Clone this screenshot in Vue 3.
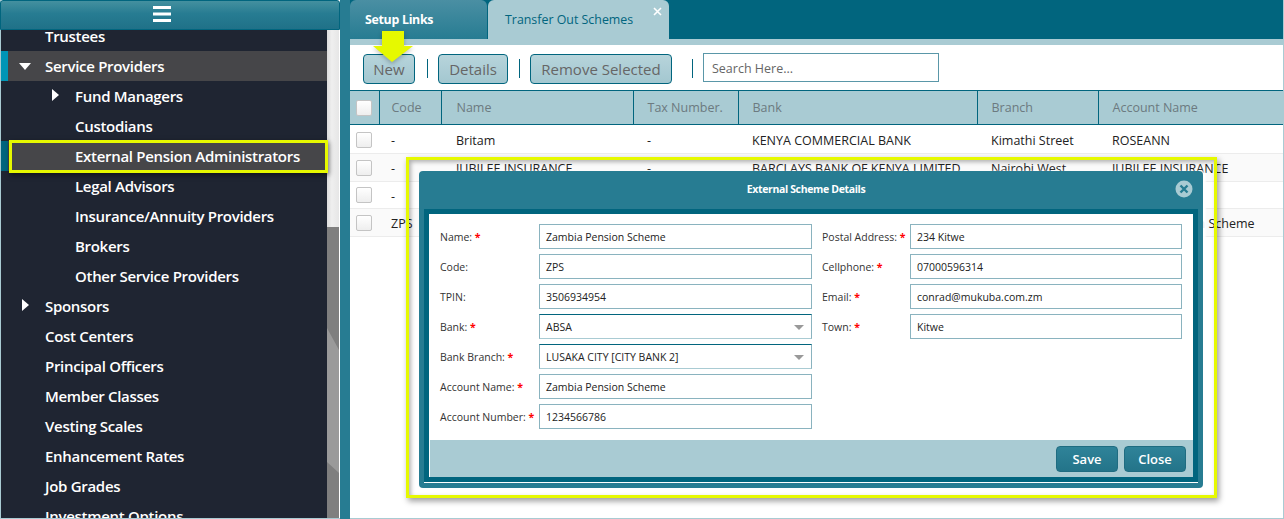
<template>
  <div class="page">
    <aside class="sidebar">
      <div class="side-head">
        <svg width="18" height="17" viewBox="0 0 18 17"><rect y="0" width="18" height="3" fill="#fff" /><rect y="6.5" width="18" height="3" fill="#fff" /><rect y="13" width="18" height="3" fill="#fff" /></svg>
      </div>
      <div class="side-body">
        <ul class="menu">
          <li v-for="item in menu" :key="item.label" :class="['menu-item', 'lvl' + item.level, item.state]">
            <span v-if="item.arrow" :class="['tri', item.arrow]"></span>
            {{ item.label }}
          </li>
        </ul>
        <div class="scrollbar">
          <div class="scroll-track"></div>
          <div class="scroll-thumb">
            <svg width="12" height="292" viewBox="0 0 12 292" preserveAspectRatio="none">
              <polygon points="0,101 12,123 12,246 0,235" fill="#9a9a9a" />
            </svg>
          </div>
        </div>
      </div>
    </aside>

    <div class="gutter"></div>

    <main class="content">
      <div class="tabs">
        <div class="tab tab-off">Setup Links</div>
        <div class="tab tab-on">
          Transfer Out Schemes
          <svg class="tab-x" width="9" height="9" viewBox="0 0 9 9"><path d="M1 1 L8 8 M8 1 L1 8" stroke="#fff" stroke-width="1.6" /></svg>
        </div>
      </div>
      <div class="tab-strip"></div>

      <div class="toolbar">
        <button class="tool-btn btn-new">New</button>
        <span class="sep sep-a"></span>
        <button class="tool-btn btn-details">Details</button>
        <span class="sep sep-b"></span>
        <button class="tool-btn btn-remove">Remove Selected</button>
        <span class="sep sep-c"></span>
        <div class="search">Search Here...</div>
      </div>

      <table class="grid">
        <colgroup>
          <col style="width: 29px" /><col style="width: 62px" /><col style="width: 192px" /><col style="width: 105px" /><col style="width: 239px" /><col style="width: 121px" /><col />
        </colgroup>
        <thead>
          <tr>
            <th class="check-cell"><span class="check"></span></th>
            <th v-for="col in columns" :key="col">{{ col }}</th>
          </tr>
        </thead>
        <tbody>
          <tr v-for="(row, i) in rows" :key="i">
            <td class="check-cell"><span class="check"></span></td>
            <td v-for="(cell, c) in row" :key="c">{{ cell }}</td>
          </tr>
        </tbody>
      </table>
    </main>

    <!-- annotations and dialog sit over the page -->
    <div class="mark-menu"></div>
    <svg class="mark-arrow" width="44" height="34" viewBox="0 0 44 34">
      <polygon points="10,0 32,0 32,15 41,15 20,31 1,15 10,15" fill="#e6f900" />
    </svg>

    <div class="dialog">
      <div class="dialog-title">
        External Scheme Details
        <svg class="dialog-x" width="18" height="18" viewBox="0 0 18 18">
          <circle cx="9" cy="9" r="8.5" fill="#a9cbd3" />
          <path d="M5.5 5.5 L12.5 12.5 M12.5 5.5 L5.5 12.5" stroke="#277c92" stroke-width="2.4" />
        </svg>
      </div>
      <div class="dialog-frame">
        <div class="form">
          <div class="form-col col-left">
            <div v-for="f in leftFields" :key="f.label" class="form-row">
              <label>{{ f.label }}<b v-if="f.req"> *</b></label>
              <div :class="['field', { dark: f.select }]">
                {{ f.value }}
                <span v-if="f.select" class="caret"></span>
              </div>
            </div>
          </div>
          <div class="form-col col-right">
            <div v-for="f in rightFields" :key="f.label" class="form-row">
              <label>{{ f.label }}<b v-if="f.req"> *</b></label>
              <div class="field">{{ f.value }}</div>
            </div>
          </div>
        </div>
        <div class="dialog-foot">
          <button class="foot-btn">Save</button>
          <button class="foot-btn">Close</button>
        </div>
      </div>
    </div>

    <div class="mark-dialog"></div>
  </div>
</template>

<script setup>
const menu = [
  { label: 'Trustees', level: 1 },
  { label: 'Service Providers', level: 1, arrow: 'down', state: 'open' },
  { label: 'Fund Managers', level: 2, arrow: 'right' },
  { label: 'Custodians', level: 2 },
  { label: 'External Pension Administrators', level: 2, state: 'current' },
  { label: 'Legal Advisors', level: 2 },
  { label: 'Insurance/Annuity Providers', level: 2 },
  { label: 'Brokers', level: 2 },
  { label: 'Other Service Providers', level: 2 },
  { label: 'Sponsors', level: 1, arrow: 'right' },
  { label: 'Cost Centers', level: 1 },
  { label: 'Principal Officers', level: 1 },
  { label: 'Member Classes', level: 1 },
  { label: 'Vesting Scales', level: 1 },
  { label: 'Enhancement Rates', level: 1 },
  { label: 'Job Grades', level: 1 },
  { label: 'Investment Options', level: 1 }
]

const columns = ['Code', 'Name', 'Tax Number.', 'Bank', 'Branch', 'Account Name']

// cells the dialog fully covers are left empty
const rows = [
  ['-', 'Britam', '-', 'KENYA COMMERCIAL BANK', 'Kimathi Street', 'ROSEANN'],
  ['-', 'JUBILEE INSURANCE', '-', 'BARCLAYS BANK OF KENYA LIMITED', 'Nairobi West', 'JUBILEE INSURANCE'],
  ['-', '', '', '', '', ''],
  ['ZPS', '', '', '', '', 'Zambia Pension Scheme']
]

const leftFields = [
  { label: 'Name:', req: true, value: 'Zambia Pension Scheme' },
  { label: 'Code:', value: 'ZPS' },
  { label: 'TPIN:', value: '3506934954' },
  { label: 'Bank:', req: true, value: 'ABSA', select: true },
  { label: 'Bank Branch:', req: true, value: 'LUSAKA CITY [CITY BANK 2]', select: true },
  { label: 'Account Name:', req: true, value: 'Zambia Pension Scheme' },
  { label: 'Account Number:', req: true, value: '1234566786' }
]

const rightFields = [
  { label: 'Postal Address:', req: true, value: '234 Kitwe' },
  { label: 'Cellphone:', req: true, value: '07000596314' },
  { label: 'Email:', req: true, value: 'conrad@mukuba.com.zm' },
  { label: 'Town:', req: true, value: 'Kitwe' }
]
</script>

<style>
body {
  margin: 0;
  background: #fff;
}
</style>

<style scoped>
.page {
  position: relative;
  display: flex;
  width: 1284px;
  height: 519px;
  overflow: hidden;
  font-family: 'Open Sans', 'Liberation Sans', sans-serif;
  background: #fff;
}

/* sidebar */
.sidebar {
  width: 340px;
  height: 519px;
  flex: none;
  display: flex;
  flex-direction: column;
  box-sizing: border-box;
  border-left: 1px solid #a9cbd3;
  border-bottom: 1px solid #a9cbd3;
}
.side-head {
  height: 30px;
  flex: none;
  margin-left: -1px;
  box-sizing: border-box;
  display: flex;
  align-items: center;
  justify-content: center;
  padding-bottom: 1px;
  padding-right: 16px;
  background: linear-gradient(#44909f, #277c92 45%, #1f7188);
  border: 1px solid #01657e;
  border-radius: 3px 3px 0 0;
}
.side-body {
  flex: 1;
  display: flex;
  min-height: 0;
}
.menu {
  list-style: none;
  margin: 0;
  padding: 0;
  width: 326px;
  flex: none;
  overflow: hidden;
  background: #1f2532;
}
.menu-item {
  position: relative;
  height: 30px;
  line-height: 30px;
  font-size: 15px;
  font-weight: 600;
  color: #fff;
  white-space: nowrap;
  letter-spacing: -0.3px;
}
.menu-item:first-child {
  margin-top: -9px;
}
.lvl1 {
  padding-left: 44px;
}
.lvl2 {
  padding-left: 74px;
}
.open {
  background: #464649;
  border-left: 7px solid #0095b6;
  padding-left: 37px;
}
.current {
  background: #464649;
  border-left: 7px solid #01657e;
  padding-left: 67px;
}
.tri {
  position: absolute;
  width: 0;
  height: 0;
}
.tri.down {
  left: 11px;
  top: 12px;
  border-left: 6.5px solid transparent;
  border-right: 6.5px solid transparent;
  border-top: 7px solid #fff;
}
.tri.right {
  top: 8px;
  border-top: 6.5px solid transparent;
  border-bottom: 6.5px solid transparent;
  border-left: 7px solid #fff;
}
.lvl1 .tri.right {
  left: 21px;
}
.lvl2 .tri.right {
  left: 51px;
}
.scrollbar {
  width: 13px;
  flex: none;
  display: flex;
  flex-direction: column;
  box-sizing: border-box;
  border-right: 1px solid #fff;
}
.scroll-track {
  height: 197px;
  flex: none;
  background: linear-gradient(90deg, #dcdcdc, #efefef 40%, #e6e6e6);
}
.scroll-thumb {
  flex: 1;
  overflow: hidden;
  background: #7f7f7f;
}
.scroll-thumb svg {
  display: block;
}

.gutter {
  width: 10px;
  flex: none;
  background: #277c92;
}

/* tabs and toolbar */
.content {
  flex: 1;
  min-width: 0;
  box-sizing: border-box;
  height: 519px;
  border-right: 1px solid #a9cbd3;
  border-bottom: 1px solid #a9cbd3;
}
.tabs {
  height: 39px;
  display: flex;
  background: #01657e;
}
.tab {
  position: relative;
  box-sizing: border-box;
  height: 39px;
  line-height: 39px;
  font-size: 12.4px;
  border-radius: 6px 6px 0 0;
  white-space: nowrap;
}
.tab-off {
  width: 137px;
  padding-left: 15px;
  margin-right: 1px;
  font-weight: 700;
  letter-spacing: -0.3px;
  color: #fff;
  background: linear-gradient(#4a8fa3, #277c92);
}
.tab-on {
  width: 181px;
  padding-left: 17px;
  color: #01657e;
  background: #a9cbd3;
}
.tab-x {
  position: absolute;
  right: 7px;
  top: 7px;
}
.tab-strip {
  height: 6px;
  background: #a9cbd3;
}
.toolbar {
  height: 45px;
  box-sizing: border-box;
  display: flex;
  align-items: flex-start;
  padding: 9px 0 0 13px;
}
.tool-btn {
  height: 30px;
  padding: 0;
  font-family: inherit;
  font-size: 15px;
  color: #666;
  background: linear-gradient(#b7d4db, #a3c7d0);
  border: 1px solid #01657e;
  border-radius: 4px;
}
.btn-new {
  width: 52px;
}
.btn-details {
  width: 70px;
}
.btn-remove {
  width: 142px;
}
.sep {
  width: 1px;
  height: 19px;
  margin-top: 5px;
  background: #01657e;
}
.sep-a {
  margin-left: 12px;
  margin-right: 10px;
}
.sep-b {
  margin-left: 11px;
  margin-right: 10px;
}
.sep-c {
  margin-left: 20px;
  margin-right: 10px;
}
.search {
  width: 236px;
  height: 29px;
  box-sizing: border-box;
  margin-top: -1px;
  padding-left: 8px;
  line-height: 29px;
  font-size: 12.5px;
  color: #666;
  background: #fff;
  border: 1px solid #5a97a8;
}

/* table */
.grid {
  width: 100%;
  table-layout: fixed;
  border-collapse: collapse;
}
.grid th {
  height: 34px;
  box-sizing: border-box;
  padding: 0 0 0 14px;
  text-align: left;
  font-size: 12.5px;
  font-weight: 400;
  color: #6c7a80;
  background: #a9cbd3;
  border-top: 1px solid #01657e;
  border-bottom: 1px solid #01657e;
  border-right: 1px solid #01657e;
  white-space: nowrap;
}
.grid th:last-child {
  border-right: none;
}
.grid td {
  height: 27.5px;
  box-sizing: border-box;
  padding: 3px 0 0 14px;
  font-size: 12.5px;
  color: #222;
  border-bottom: 1px solid #ececec;
  white-space: nowrap;
  overflow: hidden;
}
.grid tbody tr:first-child td {
  height: 29px;
}
.grid th:nth-child(2),
.grid td:nth-child(2) {
  padding-left: 12px;
}
.grid th:nth-child(3),
.grid td:nth-child(3) {
  padding-left: 15px;
}
.grid tbody tr:nth-child(even) td {
  background: #fafafa;
}
.grid .check-cell {
  padding: 1px 0 0 6px;
}
.check {
  display: block;
  width: 14px;
  height: 14px;
  background: linear-gradient(#fff, #eee);
  border: 1px solid #c4c4c4;
  border-radius: 2px;
}

/* yellow callouts */
.mark-menu {
  position: absolute;
  left: 9px;
  top: 140px;
  width: 319px;
  height: 33px;
  box-sizing: border-box;
  border: 3px solid #e6f900;
  box-shadow: 1px 2px 5px rgba(0, 0, 0, 0.5);
}
.mark-arrow {
  position: absolute;
  left: 372px;
  top: 31px;
  filter: drop-shadow(0 2px 2px rgba(0, 0, 0, 0.25));
}
.mark-dialog {
  position: absolute;
  left: 406px;
  top: 157px;
  width: 811px;
  height: 341px;
  box-sizing: border-box;
  border: 3.5px solid #e6f900;
  box-shadow: 2px 3px 6px rgba(0, 0, 0, 0.4), inset 2px 2px 4px rgba(0, 0, 0, 0.3);
  pointer-events: none;
}

/* dialog */
.dialog {
  position: absolute;
  left: 419px;
  top: 171px;
  width: 784px;
  height: 317px;
  box-sizing: border-box;
  padding: 0 5px 6px;
  display: flex;
  flex-direction: column;
  background: #277c92;
  border-radius: 4px;
  box-shadow: 3px 0 2px rgba(255, 255, 255, 0.9);
}
.dialog-title {
  position: relative;
  height: 38px;
  flex: none;
  box-sizing: border-box;
  padding-right: 10px;
  line-height: 37px;
  text-align: center;
  font-size: 10.5px;
  font-weight: 700;
  letter-spacing: -0.35px;
  color: #fff;
}
.dialog-x {
  position: absolute;
  right: 5px;
  top: 9px;
}
.dialog-frame {
  flex: 1;
  display: flex;
  flex-direction: column;
  min-height: 0;
  border: 5px solid #01657e;
  background: #fff;
  box-shadow: 0 1px 0 #fff;
}
.form {
  flex: 1;
  display: flex;
  gap: 10px;
  padding: 10px 11px 0;
}
.form-col {
  display: flex;
  flex-direction: column;
  gap: 5px;
}
.form-row {
  display: flex;
  align-items: center;
  height: 25px;
}
.form-row label {
  flex: none;
  font-size: 10.5px;
  color: #333;
  white-space: nowrap;
}
.form-row b {
  color: #f00;
  font-weight: 700;
}
.col-left label {
  width: 99px;
}
.col-right label {
  width: 88px;
}
.field {
  position: relative;
  box-sizing: border-box;
  height: 25px;
  line-height: 24px;
  padding-left: 6px;
  font-size: 10.5px;
  color: #222;
  background: #fff;
  border: 1px solid #8ab3bf;
  white-space: nowrap;
}
.col-left .field {
  width: 273px;
}
.col-right .field {
  width: 272px;
}
.field.dark {
  border-top-color: #01657e;
  border-bottom-color: #a9cbd3;
}
.caret {
  position: absolute;
  right: 7px;
  top: 10px;
  width: 0;
  height: 0;
  border-left: 5px solid transparent;
  border-right: 5px solid transparent;
  border-top: 5px solid #999;
}
.dialog-foot {
  height: 37px;
  flex: none;
  box-sizing: border-box;
  display: flex;
  justify-content: flex-end;
  gap: 6px;
  padding: 6px 7px 0 0;
  background: #a9cbd3;
  border-left: 1px solid #fff;
}
.foot-btn {
  width: 62px;
  height: 26px;
  padding: 0;
  font-family: inherit;
  font-size: 13px;
  font-weight: 600;
  color: #fff;
  background: linear-gradient(#2f8399, #237489);
  border: 1px solid #1f6c81;
  border-radius: 4px;
}
</style>
